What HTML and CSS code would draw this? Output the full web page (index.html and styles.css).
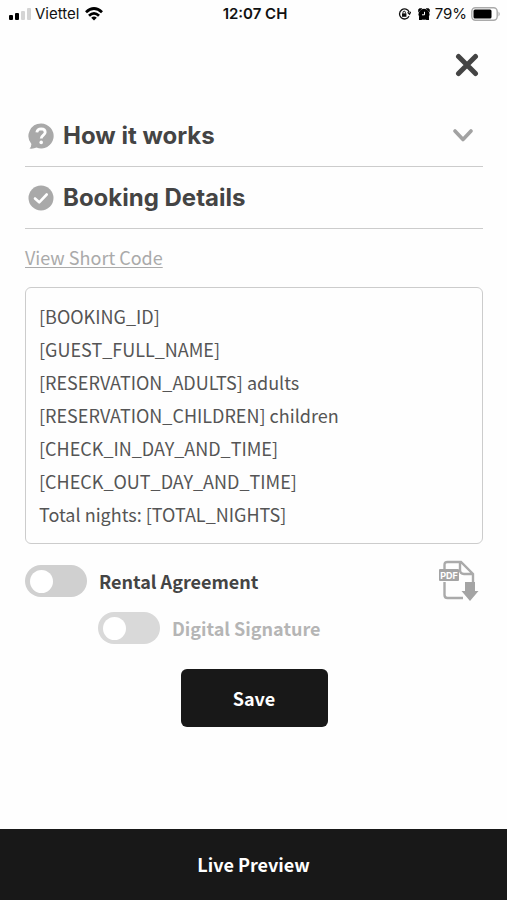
FILE: index.html
```html
<!DOCTYPE html>
<html lang="en">
<head>
<meta charset="utf-8">
<meta name="viewport" content="width=device-width, initial-scale=1">
<title>Booking Details</title>
<link rel="stylesheet" href="styles.css">
</head>
<body>
<div class="status">
  <div class="status-left">
    <svg width="22" height="12" viewBox="0 0 22 12" aria-hidden="true"><rect x="0" y="7" width="4" height="5" rx="1"/><rect x="6" y="5" width="4" height="7" rx="1"/><rect x="12" y="3" width="4" height="9" rx="1" fill="#d4d4d4"/><rect x="18" y="0" width="4" height="12" rx="1" fill="#d4d4d4"/></svg>
    <span>Viettel</span>
    <svg width="18" height="14" viewBox="0 0 18 14" fill="none" stroke="#000" stroke-width="2.8" aria-hidden="true"><path d="M1 5.2Q9-2.2 17 5.2M4 8.7Q9 4 14 8.7"/><path d="M9 13.6 6.2 10.8Q9 8.4 11.8 10.8Z" fill="#000" stroke="none"/></svg>
  </div>
  <span class="time">12:07 CH</span>
  <div class="status-right">
    <svg width="13" height="12" viewBox="0 0 13 12" fill="none" stroke="#111" stroke-width="1.3" aria-hidden="true"><path d="M11.2 4.2A5 5 0 1 0 11 8.2M9.6 4.4l1.9 1.8 1.2-2.3"/><rect x="4" y="5.4" width="4.4" height="3.4" fill="#111" stroke="none"/><path d="M5 5.6V4.4a1.2 1.2 0 0 1 2.4 0v1.2" stroke-width="1"/></svg>
    <svg class="alarm" width="12" height="12" viewBox="0 0 12 12" aria-hidden="true"><circle cx="6" cy="6.3" r="5.5"/><path d="M.2 4.5V1.5L1.5.3H4.5zM11.800 4.500V1.500L10.500.3H7.500zM1 8V12H4.500zM11 8V12H7.500z"/><path d="M6.500 3.800v3H4" fill="none" stroke="#fff" stroke-width="1"/></svg>
    <span>79%</span>
    <svg width="30" height="14" viewBox="0 0 30 14" aria-hidden="true"><rect x=".8" y=".8" width="25.4" height="12.4" rx="3.6" fill="#fff" stroke="#aaa" stroke-width="1.4"/><rect x="2.5" y="2.5" width="18" height="9" rx="1.5"/><path d="M27.5 4.5q2.5 2.5 0 5z" fill="#aaa"/></svg>
  </div>
</div>

<main class="panel">
  <div class="close-row">
    <button class="icon-button" type="button" aria-label="Close"><svg width="24" height="24" viewBox="0 0 24 24" fill="none" stroke="#444" stroke-width="5" stroke-linecap="round"><path d="M3.5 3.5 20.5 20.5M20.5 3.5 3.5 20.5"/></svg></button>
  </div>

  <button class="section" type="button">
    <svg width="26" height="26" viewBox="0 0 26 26" aria-hidden="true"><path d="M13 .5A12.5 12.5 0 1 1 8.5 24.6Q5.5 26 1.5 25.5 3.4 23.8 3.4 21A12.5 12.5 0 0 1 13 .5Z" fill="#a9a9a9"/><path d="M8.8 9.4Q9.3 5.8 13.2 5.8 17.2 5.9 17.2 9.3C17.2 12.2 13.2 12 13.2 15.6" fill="none" stroke="#fff" stroke-width="2.8"/><circle cx="13.2" cy="19.4" r="1.8" fill="#fff"/></svg>
    <span class="title">How it works</span>
    <svg width="20" height="13" viewBox="0 0 20 13" fill="none" stroke="#a2a2a2" stroke-width="3.6" stroke-linecap="round" stroke-linejoin="round" aria-hidden="true"><path d="M2 2 10 10.5 18 2"/></svg>
  </button>
  <button class="section" type="button">
    <svg width="26" height="26" viewBox="0 0 26 26" aria-hidden="true"><circle cx="13" cy="13" r="12.5" fill="#a9a9a9"/><path d="M7 13.5 11.2 17.3 18.7 9.5" fill="none" stroke="#fff" stroke-width="2.6" stroke-linecap="round" stroke-linejoin="round"/></svg>
    <span class="title">Booking Details</span>
  </button>

  <a class="short-code" href="#template">View Short Code</a>
  <textarea class="template" id="template" rows="7" aria-label="Booking details template">[BOOKING_ID]
[GUEST_FULL_NAME]
[RESERVATION_ADULTS] adults
[RESERVATION_CHILDREN] children
[CHECK_IN_DAY_AND_TIME]
[CHECK_OUT_DAY_AND_TIME]
Total nights: [TOTAL_NIGHTS]</textarea>

  <div class="option">
    <input class="switch" type="checkbox" role="switch" id="rental">
    <label for="rental">Rental Agreement</label>
    <button class="icon-button pdf" type="button" aria-label="Download PDF">
      <svg width="40" height="42" viewBox="0 0 40 42"><path d="M5.5 10V5Q5.5 2 8.500 2H22L34 14V22M5.500 22V35Q5.500 38 8.500 38H24M21 2V10Q21 14 25 14H34" fill="none" stroke="#aaa" stroke-width="2.400"/><rect x="0" y="9" width="20" height="12" rx="1" fill="#a4a4a4"/><text class="pdf-text" x="10" y="18.500" text-anchor="middle">PDF</text><path d="M26 22H36V31H39.500L31 41 22.500 31H26Z" fill="#a4a4a4"/></svg>
    </button>
  </div>
  <div class="option nested">
    <input class="switch" type="checkbox" role="switch" id="signature" disabled>
    <label for="signature">Digital Signature</label>
  </div>

  <button class="save" type="button">Save</button>
</main>
<button class="preview" type="button">Live Preview</button>
</body>
</html>
```
FILE: styles.css
```css
* {
  box-sizing: border-box;
}

body {
  margin: 0;
  min-height: 100vh;
  display: flex;
  flex-direction: column;
  background: #fefefe;
  color: #444;
  font-family: "Noto Sans CJK SC", "Noto Sans", sans-serif;
  font-size: 18px;
}

button {
  margin: 0;
  padding: 0;
  border: 0;
  background: none;
  color: inherit;
  font: inherit;
  cursor: pointer;
}

svg {
  display: block;
  flex: none;
}

.status {
  display: grid;
  grid-template-columns: 1fr auto 1fr;
  align-items: center;
  height: 28px;
  padding: 0 6px 0 9px;
  color: #111;
  font: 15px/20px Inter, sans-serif;
}

.status-left,
.status-right {
  display: flex;
  align-items: center;
  gap: 4px;
}

.status-left svg:last-child {
  margin-left: 2px;
}

.status-right {
  justify-content: flex-end;
}

.alarm {
  margin: 0 1px 0 3px;
}

.time {
  font-weight: 600;
}

.panel {
  flex: 1;
  display: flex;
  flex-direction: column;
  padding: 24px 24px 32px 25px;
}

.close-row {
  display: flex;
  justify-content: flex-end;
  padding: 1px 4px 28px 0;
}

.section {
  display: flex;
  align-items: center;
  gap: 9px;
  height: 62px;
  padding: 0 10px 0 3px;
  border-bottom: 1px solid #ccc;
  text-align: left;
}

.title {
  flex: 1;
  font: 700 24px/28px Inter, sans-serif;
}

.short-code {
  align-self: flex-start;
  margin: 15px 0 16px;
  color: #aaa;
  line-height: 27px;
  text-underline-offset: 2px;
}

.template {
  display: block;
  width: 100%;
  padding: 12px 13px;
  border: 1px solid #ccc;
  border-radius: 6px;
  outline: 0;
  resize: none;
  overflow: hidden;
  background: transparent;
  color: #555;
  font: inherit;
  line-height: 33px;
}

.option {
  display: flex;
  align-items: center;
  gap: 12px;
  min-height: 32px;
  margin-top: 16px;
  font-weight: 700;
}

.nested {
  margin: 10px 0 0 73px;
  color: #b5b5b5;
}

.switch {
  appearance: none;
  flex: none;
  display: flex;
  align-items: center;
  width: 62px;
  height: 32px;
  margin: 0;
  padding: 0 5px;
  border-radius: 16px;
  background: #d0d0d0;
}

.switch::before {
  content: "";
  width: 23px;
  height: 23px;
  border-radius: 50%;
  background: #fff;
}

.switch:checked {
  justify-content: flex-end;
  background: #555;
}

.switch:disabled {
  background: #d9d9d9;
}

.pdf {
  margin-left: auto;
  margin-right: 4px;
}

.pdf-text {
  fill: #fff;
  font: 700 9px Inter, sans-serif;
}

.save {
  align-self: center;
  width: 147px;
  height: 58px;
  margin-top: 25px;
  border-radius: 6px;
  background: #181818;
  color: #fff;
  font-weight: 700;
}

.preview {
  width: 100%;
  height: 71px;
  padding-bottom: 2px;
  background: #181818;
  color: #fff;
  font-weight: 700;
}
```
